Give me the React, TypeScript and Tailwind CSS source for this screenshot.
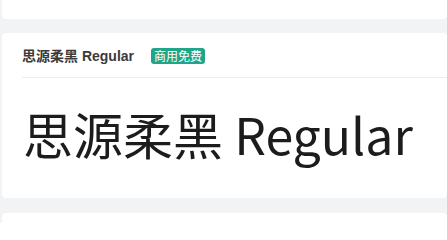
export default function App() {
  return (
    <div className="h-[223px] w-[447px] overflow-hidden bg-[#f2f3f5] pl-[2px]">
      <div className="h-[19px] rounded-b-[4px] bg-white" />
      <div className="mt-[14px] h-[165px] rounded-[4px] bg-white pl-[20px]">
        <div className="flex h-[45px] items-end border-b border-[#eeeeee] pb-[13px]">
          <span
            className="text-[14px] font-bold leading-[16px] text-[#3a3a3a]"
            style={{ fontFamily: '"Liberation Sans", "Noto Sans CJK SC", sans-serif' }}
          >
            思源柔黑 Regular
          </span>
          <span
            className="ml-[17px] rounded-[3px] bg-[#1fa68a] px-[3px] text-[12px] leading-[16px] text-white"
            style={{ fontFamily: '"Noto Sans CJK SC", sans-serif' }}
          >
            商用免费
          </span>
        </div>
        <div
          className="mt-[27px] pl-[1px] text-[50px] leading-[56px] text-[#1c1c1c]"
          style={{ fontFamily: '"Noto Sans CJK SC", sans-serif' }}
        >
          思源柔黑 Regular
        </div>
      </div>
      <div className="mt-[15px] h-[40px] rounded-t-[4px] bg-white" />
    </div>
  );
}
